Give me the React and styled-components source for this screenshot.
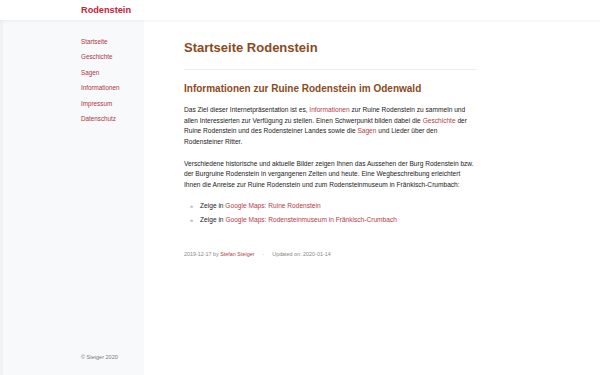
import styled, { createGlobalStyle } from "styled-components";

const Global = createGlobalStyle`
  html, body {
    margin: 0;
    padding: 0;
    background: #fff;
    font-family: "Liberation Sans", Arial, sans-serif;
  }
  a {
    color: #b83a48;
    text-decoration: none;
  }
`;

const Page = styled.div`
  display: flex;
  flex-direction: column;
  height: 375px;
  overflow: hidden;
`;

const Header = styled.header`
  height: 20px;
  flex-shrink: 0;
  display: flex;
  align-items: center;
  padding-left: 81px;
  background: #fff;
  box-shadow: 0 1px 3px rgba(0, 0, 0, 0.06);
  position: relative;
  z-index: 1;
`;

const Brand = styled.a`
  font-size: 9.2px;
  font-weight: bold;
  color: #c2243a;
`;

const Body = styled.div`
  flex: 1;
  display: flex;
`;

const Sidebar = styled.aside`
  width: 144px;
  flex-shrink: 0;
  background: #f8f9fb;
  border-left: 3px solid #f1f2f4;
  box-sizing: border-box;
  padding: 18px 0 15px 78px;
  display: flex;
  flex-direction: column;
  justify-content: space-between;
`;

const Nav = styled.nav`
  display: flex;
  flex-direction: column;
  gap: 7.4px;
`;

const NavLink = styled.a`
  font-size: 6.3px;
  line-height: 8px;
  color: #b0343f;
`;

const Copy = styled.div`
  font-size: 5.5px;
  color: #777;
`;

const Main = styled.main`
  flex: 1;
  padding: 19px 0 0 40px;
`;

const Content = styled.div`
  width: 293px;
`;

const Title = styled.h1`
  margin: 0;
  font-size: 13px;
  line-height: 18px;
  color: #8c4a1c;
  padding-bottom: 12px;
  border-bottom: 1px solid #eeeeee;
`;

const Subtitle = styled.h2`
  margin: 12px 0 0;
  font-size: 10px;
  line-height: 14px;
  color: #8c4a1c;
`;

const Para = styled.p`
  margin: 9px 0 0;
  font-size: 6.6px;
  line-height: 10.7px;
  color: #222;
  & + & {
    margin-top: 10.7px;
  }
`;

const List = styled.ul`
  margin: 8px 0 0;
  padding: 0 0 0 6px;
  list-style: none;
`;

const Item = styled.li`
  font-size: 6.6px;
  line-height: 14px;
  color: #222;
  display: flex;
  gap: 7px;
  &::before {
    content: "»";
    color: #888;
    font-size: 5.5px;
  }
`;

const Meta = styled.div`
  margin-top: 24px;
  font-size: 5.4px;
  color: #888;
  display: flex;
  gap: 8px;
  a {
    color: #b83a48;
  }
`;

const links = [
  "Startseite",
  "Geschichte",
  "Sagen",
  "Informationen",
  "Impressum",
  "Datenschutz",
];

export default function App() {
  return (
    <Page>
      <Global />
      <Header>
        <Brand href="#">Rodenstein</Brand>
      </Header>
      <Body>
        <Sidebar>
          <Nav>
            {links.map((l) => (
              <NavLink key={l} href="#">
                {l}
              </NavLink>
            ))}
          </Nav>
          <Copy>© Steiger 2020</Copy>
        </Sidebar>
        <Main>
          <Content>
            <Title>Startseite Rodenstein</Title>
            <Subtitle>Informationen zur Ruine Rodenstein im Odenwald</Subtitle>
            <Para>
              Das Ziel dieser Internetpräsentation ist es,{" "}
              <a href="#">Informationen</a> zur Ruine Rodenstein zu sammeln und
              allen Interessierten zur Verfügung zu stellen. Einen Schwerpunkt
              bilden dabei die <a href="#">Geschichte</a> der Ruine Rodenstein
              und des Rodensteiner Landes sowie die <a href="#">Sagen</a> und
              Lieder über den Rodensteiner Ritter.
            </Para>
            <Para>
              Verschiedene historische und aktuelle Bilder zeigen Ihnen das
              Aussehen der Burg Rodenstein bzw. der Burgruine Rodenstein in
              vergangenen Zeiten und heute. Eine Wegbeschreibung erleichtert
              Ihnen die Anreise zur Ruine Rodenstein und zum Rodensteinmuseum
              in Fränkisch-Crumbach:
            </Para>
            <List>
              <Item>
                <span>
                  Zeige in <a href="#">Google Maps: Ruine Rodenstein</a>
                </span>
              </Item>
              <Item>
                <span>
                  Zeige in{" "}
                  <a href="#">
                    Google Maps: Rodensteinmuseum in Fränkisch-Crumbach
                  </a>
                </span>
              </Item>
            </List>
            <Meta>
              <span>
                2019-12-17 by <a href="#">Stefan Steiger</a>
              </span>
              <span>·</span>
              <span>Updated on: 2020-01-14</span>
            </Meta>
          </Content>
        </Main>
      </Body>
    </Page>
  );
}
